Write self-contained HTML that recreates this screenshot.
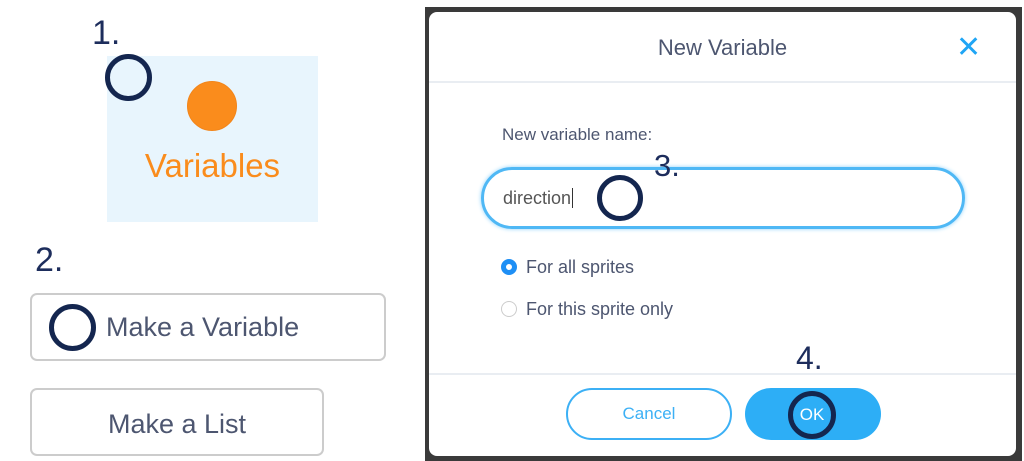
<!DOCTYPE html>
<html><head><style>
*{margin:0;padding:0;box-sizing:border-box}
body{width:1024px;height:461px;background:#fff;position:relative;overflow:hidden;font-family:"Liberation Sans",sans-serif}
.a{position:absolute}
.ring{position:absolute;border:5px solid #14264f;border-radius:50%}
.num{position:absolute;color:#1d2d5c;font-size:34px;font-family:"Liberation Sans",sans-serif}
</style></head><body>
<div class="a" style="left:107px;top:56px;width:211px;height:166px;background:#e8f5fd"></div>
<div class="a" style="left:187px;top:81px;width:50px;height:50px;border-radius:50%;background:#fa8c1c;border:1px solid #f2851a"></div>
<div class="a" style="left:107px;top:147px;width:211px;text-align:center;color:#fa8c1c;font-size:33px">Variables</div>
<div class="num" style="left:92px;top:14px">1.</div>
<div class="ring" style="left:105px;top:54px;width:47px;height:47px"></div>
<div class="num" style="left:35px;top:241px">2.</div>
<div class="a" style="left:30px;top:293px;width:356px;height:68px;border:2px solid #ccc;border-radius:7px"></div>
<div class="ring" style="left:49px;top:304px;width:47px;height:47px"></div>
<div class="a" style="left:106px;top:312px;color:#4d5670;font-size:27px">Make a Variable</div>
<div class="a" style="left:30px;top:388px;width:294px;height:68px;border:2px solid #ccc;border-radius:7px;color:#4d5670;font-size:27px;text-align:center;line-height:68px">Make a List</div>

<div class="a" style="left:425px;top:7px;width:597px;height:454px;background:#3a3a3a"></div>
<div class="a" style="left:429px;top:12px;width:587px;height:444px;background:#fff;border-radius:8px"></div>
<div class="a" style="left:429px;top:35px;width:587px;text-align:center;color:#4d5670;font-size:22px">New Variable</div>
<div class="a" style="left:956px;top:28px;color:#1fa5f5;font-size:30px;line-height:40px">✕</div>
<div class="a" style="left:429px;top:81px;width:587px;height:2px;background:#e9edf2"></div>
<div class="a" style="left:502px;top:125px;color:#4d5670;font-size:17px">New variable name:</div>
<div class="a" style="left:481px;top:167px;width:484px;height:62px;border:3px solid #4fb8f5;border-radius:31px;box-shadow:0 0 4px #8fd2fa"></div>
<div class="a" style="left:503px;top:188px;color:#555;font-size:18px">direction<span style="border-left:1.5px solid #333;margin-left:1px"></span></div>
<div class="ring" style="left:597px;top:175px;width:46px;height:46px"></div>
<div class="num" style="left:654px;top:148px;font-size:31px">3.</div>
<div class="a" style="left:501px;top:259px;width:16px;height:16px;border-radius:50%;border:5px solid #1e8ff5"></div>
<div class="a" style="left:526px;top:257px;color:#4d5670;font-size:18px">For all sprites</div>
<div class="a" style="left:501px;top:301px;width:16px;height:16px;border-radius:50%;border:1.5px solid #ccc"></div>
<div class="a" style="left:526px;top:299px;color:#4d5670;font-size:18px">For this sprite only</div>
<div class="num" style="left:796px;top:340px;font-size:32px">4.</div>
<div class="a" style="left:429px;top:373px;width:587px;height:2px;background:#e9edf2"></div>
<div class="a" style="left:566px;top:388px;width:166px;height:52px;border:2px solid #3cb0f5;border-radius:26px;color:#3cb0f5;font-size:17px;text-align:center;line-height:48px">Cancel</div>
<div class="a" style="left:745px;top:388px;width:136px;height:52px;background:#2daef6;border-radius:26px"></div>
<div class="ring" style="left:788px;top:391px;width:48px;height:48px;background:#2daef6"></div>
<div class="a" style="left:788px;top:405px;width:48px;text-align:center;color:#fff;font-size:17px">OK</div>
</body></html>
